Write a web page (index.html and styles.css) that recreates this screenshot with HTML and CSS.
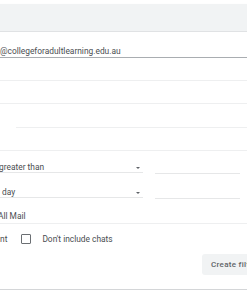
FILE: index.html
```html
<!DOCTYPE html>
<html lang="en">
<head>
    <meta charset="UTF-8">
    <meta name="viewport" content="width=device-width, initial-scale=1.0">
    <title>Filtro</title>
    <link rel="stylesheet" href="styles.css">
</head>
<body>
    <div class="dialog">
        <div class="head"></div>
        <div class="row email">
            <span class="val">@collegeforadultlearning.edu.au</span>
        </div>
        <div class="row blank"></div>
        <div class="row blank"></div>
        <div class="row blank indent"></div>
        <div class="row blank"></div>
        <div class="row size">
            <div class="select">
                <span class="val cut">greater than</span>
                <span class="arrow"></span>
            </div>
            <div class="input"></div>
        </div>
        <div class="row date">
            <div class="select">
                <span class="val">&nbsp;day</span>
                <span class="arrow"></span>
            </div>
            <div class="input"></div>
        </div>
        <div class="row search">
            <span class="val cut2">All Mail</span>
        </div>
        <div class="row checks">
            <span class="val">nt</span>
            <span class="box"></span>
            <span class="val">Don't include chats</span>
        </div>
        <div class="actions">
            <button class="btn">Create filter</button>
        </div>
    </div>
</body>
</html>
```

FILE: styles.css
```css
html{
    box-sizing: border-box;
    font-family: Roboto, "Liberation Sans", sans-serif;
    color: #4a4d51;
}
*, *::before, *::after{
    box-sizing: inherit;
}
body{
    margin: 0;
    padding-top: 4px;
    background: #fff;
    overflow: hidden;
}
.dialog{
    display: flex;
    flex-direction: column;
    height: 286px;
    border-bottom: 1px solid #d4d6d8;
    box-shadow: 0 2px 3px rgba(0,0,0,.12);
}
.head{
    height: 28px;
    background: #f1f3f4;
    border-bottom: 1px solid #e0e2e4;
}
.val{
    font-size: 8.4px;
    line-height: 10px;
    white-space: nowrap;
}
.row{
    display: flex;
    align-items: flex-end;
}
.email{
    height: 26px;
    border-bottom: 1px solid #a9adb1;
    padding-bottom: 1px;
}
.blank{
    height: 23px;
    border-bottom: 1px solid #eeeff0;
}
.indent{
    height: 24px;
    margin-left: 16px;
}
.size{
    height: 22px;
}
.date{
    height: 25px;
}
.select{
    width: 143px;
    display: flex;
    align-items: center;
    justify-content: space-between;
    padding: 0 2px 0 0;
    border-bottom: 1px solid #e6e7e8;
}
.arrow{
    width: 0;
    height: 0;
    border-left: 2.5px solid transparent;
    border-right: 2.5px solid transparent;
    border-top: 2.5px solid #5f6368;
    margin: 1px 1px 0 0;
}
.input{
    width: 85px;
    margin-left: 12px;
    border-bottom: 1px solid #e6e7e8;
    margin-bottom: -1px;
}
.cut{
    margin-left: -1px;
}
.search{
    height: 26px;
    border-bottom: 1px solid #eeeff0;
    padding-bottom: 2px;
}
.cut2{
    margin-left: -2px;
}
.checks{
    height: 21px;
    align-items: center;
    padding-top: 9px;
}
.box{
    width: 10px;
    height: 10px;
    border: 1.5px solid #6b6f73;
    border-radius: 1px;
    margin: 0 11px 0 14px;
}
.actions{
    display: flex;
    justify-content: flex-end;
    padding-top: 9px;
}
.btn{
    width: 46px;
    margin-right: -1px;
    height: 21px;
    border: none;
    border-radius: 3px 0 0 3px;
    background: #f1f3f4;
    color: #5f6368;
    font-family: Roboto, sans-serif;
    font-size: 8px;
    font-weight: 500;
    letter-spacing: .3px;
    text-align: left;
    padding: 0 0 0 9px;
    white-space: nowrap;
    overflow: hidden;
}
```
